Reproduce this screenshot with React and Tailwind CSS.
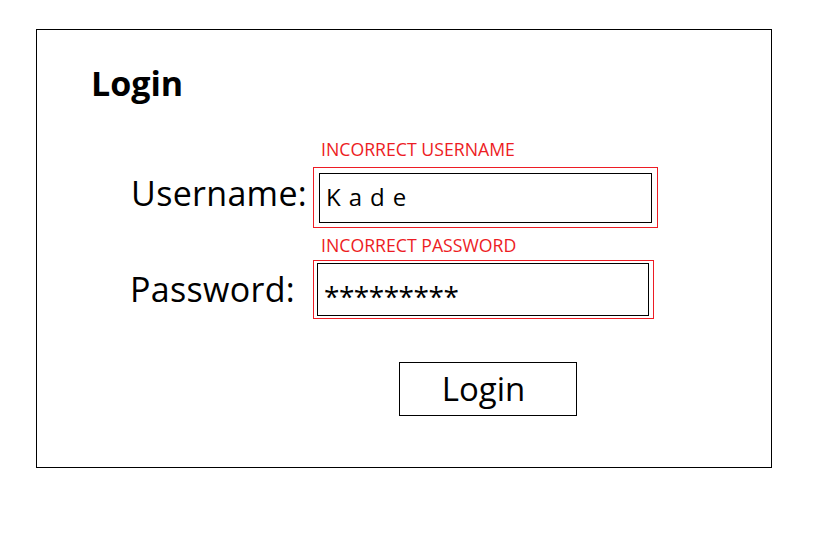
import React from 'react'

export default function App() {
  return (
    <div className="w-[838px] h-[543px] bg-white pt-[29px] pl-[36px]" style={{ fontFamily: '"Open Sans", "Noto Sans", sans-serif' }}>
      <div className="w-[736px] h-[439px] border border-black">
        {/* Title */}
        <h1 className="pl-[54px] pt-[33px] text-[34px] leading-[40px] font-bold text-black">Login</h1>

        {/* Username */}
        <div className="mt-[36px] flex">
          <div className="w-[276px]" />
          <div className="pl-[8px] text-[17.7px] leading-[20px] text-[#ed1c24]">INCORRECT USERNAME</div>
        </div>
        <div className="mt-[8px] flex items-start">
          <div className="w-[276px] mt-[6px] pr-[6px] text-right text-[34px] leading-[40px] tracking-[0.3px] text-black">Username:</div>
          <div className="w-[345px] h-[61px] border border-[#ed1c24] pt-[5px] pb-[4px] px-[5px]">
            <div className="h-full border border-black pl-[6px] pt-[8px] text-[24px] leading-[30px] tracking-[8px] text-black">
              Kade
            </div>
          </div>
        </div>

        {/* Password */}
        <div className="mt-[7px] flex">
          <div className="w-[276px]" />
          <div className="pl-[8px] text-[17.7px] leading-[20px] text-[#ed1c24]">INCORRECT PASSWORD</div>
        </div>
        <div className="mt-[5px] flex items-start">
          <div className="w-[276px] mt-[9px] pr-[18px] text-right text-[34px] leading-[40px] tracking-[0.3px] text-black">Password:</div>
          <div className="w-[341px] h-[59px] border border-[#ed1c24] py-[2px] pl-[3px] pr-[4px]">
            <div className="h-full border border-black pl-[6px] pt-[17px] text-[28px] leading-[30px] tracking-[-0.5px] text-black">
              *********
            </div>
          </div>
        </div>

        {/* Submit */}
        <div className="mt-[43px] pl-[362px]">
          <button className="w-[178px] h-[54px] border border-black flex items-center justify-center pr-[9px] text-[33px] leading-[40px] text-black">
            Login
          </button>
        </div>
      </div>
    </div>
  )
}
